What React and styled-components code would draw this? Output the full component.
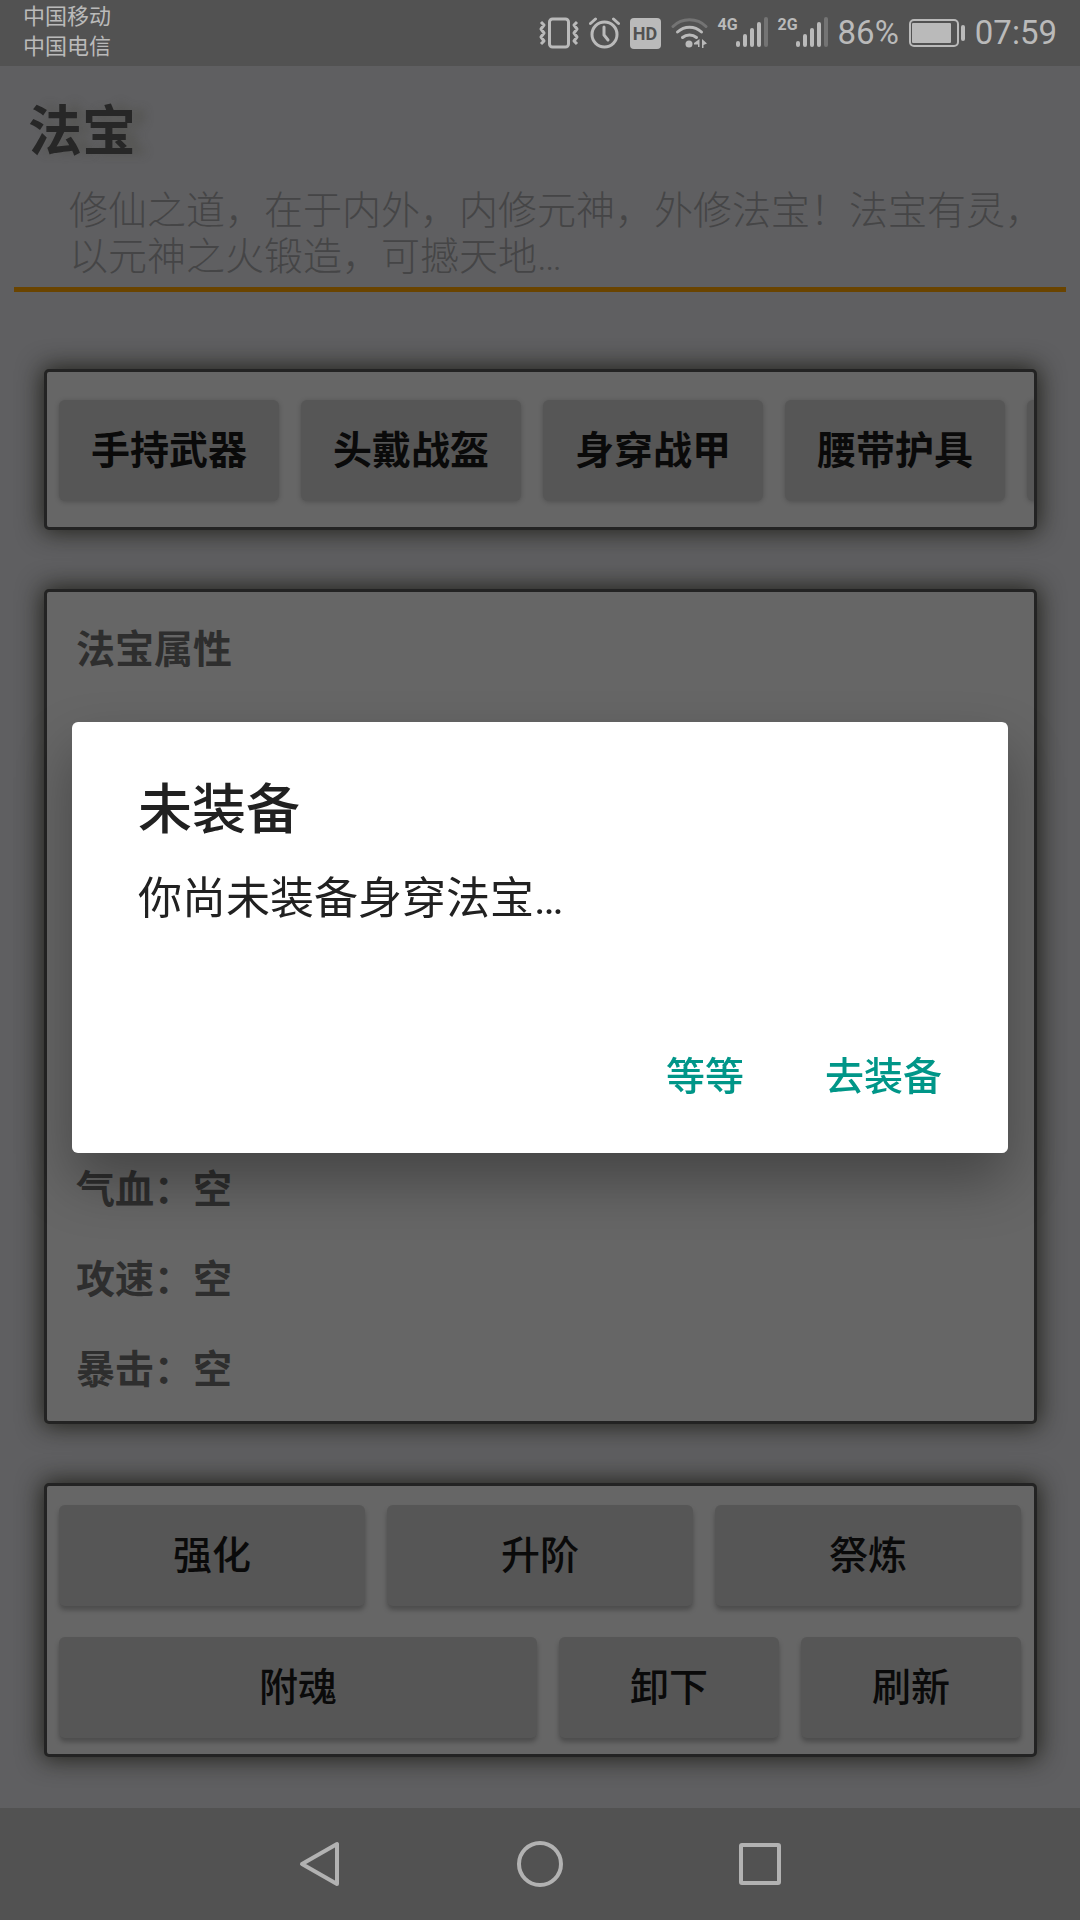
import React from "react";
import styled, { createGlobalStyle } from "styled-components";

const GlobalStyle = createGlobalStyle`
  * { box-sizing: border-box; }
  body {
    margin: 0;
    background: #5f5f61;
    font-family: Roboto, "Noto Sans CJK SC", sans-serif;
  }
  button { font-family: inherit; border: 0; padding: 0; cursor: pointer; }
  h1, h2, p, ul { margin: 0; padding: 0; font-weight: inherit; }
  ul { list-style: none; }
`;

const Screen = styled.div`
  display: flex;
  flex-direction: column;
  min-height: 100vh;
`;

const StatusBar = styled.header`
  display: flex;
  justify-content: space-between;
  align-items: center;
  height: 66px;
  padding: 0 23px;
  background: #525252;
  color: #bababa;
`;

const Carriers = styled.div`
  font-size: 22px;
  line-height: 30px;
  padding-bottom: 2px;
`;

const StatusIcons = styled.div`
  display: flex;
  align-items: center;
  gap: 10px;
  font-size: 33px;
  line-height: 40px;

  svg { display: block; flex: none; }
`;

const HdBadge = styled.span`
  width: 31px;
  height: 31px;
  border-radius: 4px;
  background: #bababa;
  color: #525252;
  font-size: 18px;
  font-weight: 700;
  line-height: 31px;
  text-align: center;
`;

const Signal = styled.span`
  display: flex;
  align-items: flex-start;
`;

const NetworkType = styled.span`
  font-family: "Liberation Sans Narrow", Roboto, sans-serif;
  font-size: 16px;
  font-weight: 700;
  line-height: 16px;
  width: 18px;
`;

const PageHeader = styled.div`
  margin: 0 14px;
  padding: 35px 0 7px;
  border-bottom: 5px solid #6a4400;
`;

const PageTitle = styled.h1`
  padding-left: 14px;
  font-size: 54px;
  font-weight: 700;
  line-height: 64px;
  color: #272727;
  text-shadow: 12px 0 10px rgba(70, 70, 60, 0.4);
`;

const Intro = styled.p`
  margin-top: 23px;
  padding-left: 55px;
  font-size: 39px;
  font-weight: 300;
  line-height: 46px;
  color: #454546;
`;

const Main = styled.main`
  flex: 1;
  display: flex;
  flex-direction: column;
  gap: 59px;
  padding: 77px 43px 51px 44px;
`;

const Card = styled.section`
  display: flex;
  flex-direction: column;
  gap: ${(p) => p.$gap || 0}px;
  flex-grow: ${(p) => (p.$fill ? 1 : 0)};
  justify-content: space-between;
  padding: ${(p) => p.$pad};
  border: 3px solid #232323;
  border-radius: 5px;
  background: #666;
  box-shadow: 0 0 24px 2px rgba(18, 18, 10, 0.8);
`;

const SlotRow = styled.div`
  display: flex;
  gap: 22px;
  overflow: hidden;
  padding: 28px 0 26px 12px;
`;

const ActionRow = styled.div`
  display: flex;
  gap: 22px;
`;

const TileButton = styled.button`
  flex: ${(p) => (p.$fixed ? "0 0 220px" : "1 1 0")};
  height: 101px;
  border-radius: 6px;
  background: #565656;
  color: #0a0a0a;
  font-size: 39px;
  font-weight: ${(p) => (p.$bold ? 700 : 500)};
  line-height: 46px;
  box-shadow: ${(p) =>
    p.$bold ? "0 1px 5px rgba(0, 0, 0, 0.22)" : "0 4px 5px rgba(0, 0, 0, 0.26)"};
`;

const StatText = styled.div`
  font-size: 39px;
  font-weight: 700;
  line-height: 90px;
  color: #2e2e2e;
`;

const NavBar = styled.nav`
  display: flex;
  justify-content: center;
  height: 112px;
  background: #525252;
`;

const NavButton = styled.button`
  display: flex;
  align-items: center;
  justify-content: center;
  width: 220px;
  background: none;
`;

const Overlay = styled.div`
  position: fixed;
  inset: 0;
  display: flex;
  align-items: center;
  padding: 66px 72px 112px;
`;

const Dialog = styled.div`
  flex: 1;
  padding: 57px 42px 36px 66px;
  border-radius: 6px;
  background: #fff;
  color: #212121;
  box-shadow: 0 28px 56px rgba(0, 0, 0, 0.32);
`;

const DialogTitle = styled.h2`
  font-size: 54px;
  font-weight: 500;
  line-height: 64px;
`;

const DialogMessage = styled.p`
  margin-top: 30px;
  font-size: 44px;
  line-height: 52px;
`;

const DialogActions = styled.div`
  display: flex;
  justify-content: flex-end;
  gap: 33px;
  margin-top: 112px;
`;

const TextButton = styled.button`
  padding: 0 24px;
  background: none;
  color: #009688;
  font-size: 39px;
  font-weight: 500;
  line-height: 80px;
`;

const LIGHT = "#bababa";
const SLOTS = ["手持武器", "头戴战盔", "身穿战甲", "腰带护具"];
const STATS = ["气血:空", "攻速:空", "暴击:空"];

function VibrateIcon() {
  return (
    <svg width="40" height="32" viewBox="0 0 40 32" fill="none" stroke={LIGHT} strokeWidth="3">
      <rect x="10.500" y="2" width="19" height="28" rx="3" />
      <path d="M2 5l3 3-3 4 3 4-3 4 3 4-3 3M38 5l-3 3 3 4-3 4 3 4-3 4 3 3" strokeWidth="3" strokeLinejoin="round" />
    </svg>
  );
}

function AlarmIcon() {
  return (
    <svg width="31" height="32" viewBox="0 0 31 32" fill="none" stroke={LIGHT} strokeWidth="3" strokeLinecap="round">
      <circle cx="15.500" cy="17.500" r="12.500" />
      <path d="M15 10v8l4 5" />
      <path d="M1.500 6.500l5-4.500M29.500 6.500l-5-4.500" />
    </svg>
  );
}

function WifiIcon() {
  return (
    <svg width="37" height="32" viewBox="0 0 37 32" fill="none" stroke={LIGHT} strokeWidth="3" strokeLinecap="round">
      <path d="M2 9.500C11 0.500 26 0.500 35 9.500" stroke="#747474" />
      <path d="M6.500 15C13.500 8.500 23.500 8.500 30.500 15" />
      <path d="M11.500 20.500C15.500 17 21.500 17 25.500 20.500" />
      <circle cx="18" cy="27" r="3.500" fill={LIGHT} stroke="none" />
      <path d="M28.500 22v8h-1.500v-2.500h-4v-1.500zM31 22l5 4.500-3.500 1.500v3H31z" fill={LIGHT} stroke="none" />
    </svg>
  );
}

function BarsIcon() {
  const tops = [26, 19, 13, 7, 2];
  return (
    <svg width="32" height="32" viewBox="0 0 32 32" strokeWidth="4" strokeLinecap="round">
      {tops.map((top, i) => (
        <path key={top} d={`M${2 + i * 7} ${top}V28`} stroke={i === 4 ? "#747474" : LIGHT} />
      ))}
    </svg>
  );
}

function BatteryIcon() {
  return (
    <svg width="56" height="28" viewBox="0 0 56 28">
      <rect x="1" y="1" width="48" height="26" rx="4" fill="none" stroke={LIGHT} strokeWidth="2" />
      <rect x="3" y="4" width="39" height="20" rx="1" fill={LIGHT} />
      <rect x="52" y="6" width="4" height="16" rx="2" fill={LIGHT} />
    </svg>
  );
}

function NavIcon({ children }) {
  return (
    <svg width="48" height="48" viewBox="0 0 48 48" fill="none" stroke="#b2b2b2" strokeWidth="4" strokeLinejoin="round">
      {children}
    </svg>
  );
}

export default function App() {
  return (
    <>
      <GlobalStyle />
      <Screen>
        <StatusBar>
          <Carriers>
            <div>中国移动</div>
            <div>中国电信</div>
          </Carriers>
          <StatusIcons>
            <VibrateIcon />
            <AlarmIcon />
            <HdBadge>HD</HdBadge>
            <WifiIcon />
            <Signal>
              <NetworkType>4G</NetworkType>
              <BarsIcon />
            </Signal>
            <Signal>
              <NetworkType>2G</NetworkType>
              <BarsIcon />
            </Signal>
            <span>86%</span>
            <BatteryIcon />
            <span>07:59</span>
          </StatusIcons>
        </StatusBar>

        <PageHeader>
          <PageTitle>法宝</PageTitle>
          <Intro>
            修仙之道，在于内外，内修元神，外修法宝！法宝有灵，以元神之火锻造，可撼天地…
          </Intro>
        </PageHeader>

        <Main>
          <Card $pad="0">
            <SlotRow>
              {SLOTS.map((slot) => (
                <TileButton key={slot} $fixed $bold>{slot}</TileButton>
              ))}
              <TileButton $fixed $bold aria-label="更多" />
            </SlotRow>
          </Card>

          <Card $fill $pad="13px 29px 6px">
            <StatText as="h2">法宝属性</StatText>
            <ul>
              {STATS.map((stat) => (
                <StatText as="li" key={stat}>{stat.replace(":", "：")}</StatText>
              ))}
            </ul>
          </Card>

          <Card $gap={31} $pad="19px 13px 16px 12px">
            <ActionRow>
              <TileButton>强化</TileButton>
              <TileButton>升阶</TileButton>
              <TileButton>祭炼</TileButton>
            </ActionRow>
            <ActionRow>
              <TileButton>附魂</TileButton>
              <TileButton $fixed>卸下</TileButton>
              <TileButton $fixed>刷新</TileButton>
            </ActionRow>
          </Card>
        </Main>

        <NavBar>
          <NavButton aria-label="返回">
            <NavIcon><path d="M41 4v40L6 24z" /></NavIcon>
          </NavButton>
          <NavButton aria-label="主页">
            <NavIcon><circle cx="24" cy="24" r="21" /></NavIcon>
          </NavButton>
          <NavButton aria-label="最近任务">
            <NavIcon><rect x="5" y="5" width="38" height="38" rx="1" /></NavIcon>
          </NavButton>
        </NavBar>
      </Screen>

      <Overlay>
        <Dialog role="dialog" aria-modal="true" aria-labelledby="dialog-title">
          <DialogTitle id="dialog-title">未装备</DialogTitle>
          <DialogMessage>你尚未装备身穿法宝…</DialogMessage>
          <DialogActions>
            <TextButton>等等</TextButton>
            <TextButton>去装备</TextButton>
          </DialogActions>
        </Dialog>
      </Overlay>
    </>
  );
}
